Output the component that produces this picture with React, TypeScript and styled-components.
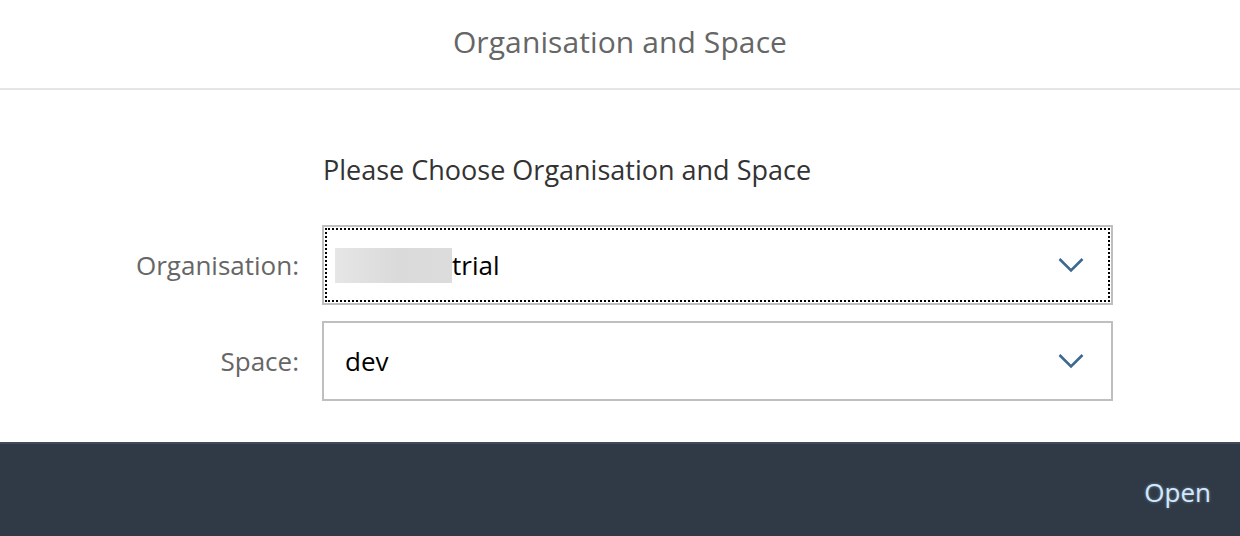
import React from "react";
import styled, { createGlobalStyle } from "styled-components";

const GlobalStyle = createGlobalStyle`
  html, body { margin: 0; padding: 0; background: #ffffff; }
  body { font-family: "Open Sans", "Noto Sans", Arial, sans-serif; }
  * { box-sizing: border-box; }
`;

const Dialog = styled.div`
  width: 1240px;
  height: 536px;
  display: flex;
  flex-direction: column;
  background: #ffffff;
`;

const Header = styled.header`
  height: 90px;
  flex: none;
  display: flex;
  align-items: center;
  justify-content: center;
  border-bottom: 2px solid #e5e5e5;
  padding-bottom: 5px;
`;

const Title = styled.h1`
  margin: 0;
  font-size: 30px;
  font-weight: 400;
  color: #666666;
  letter-spacing: 0.1px;
`;

const Body = styled.main`
  flex: 1;
  padding-top: 62px;
`;

const Form = styled.div`
  display: grid;
  grid-template-columns: 299px 791px;
  column-gap: 23px;
  row-gap: 16px;
  align-items: center;
`;

const Subtitle = styled.p`
  grid-column: 2;
  margin: 0 0 21px 1px;
  font-size: 27px;
  line-height: 36px;
  color: #333333;
`;

const Label = styled.label`
  grid-column: 1;
  text-align: right;
  font-size: 26px;
  color: #666666;
`;

const Select = styled.div<{ $focused?: boolean }>`
  grid-column: 2;
  height: 80px;
  border: 2px solid #bfbfbf;
  display: flex;
  align-items: center;
  justify-content: space-between;
  padding: 0 27px 0 21px;
  outline: ${(p) => (p.$focused ? "2px dotted #000000" : "none")};
  outline-offset: -5px;
`;

const Value = styled.span`
  display: flex;
  align-items: center;
  font-size: 26px;
  color: #000000;
`;

const Redacted = styled.span`
  display: inline-block;
  width: 117px;
  height: 35px;
  margin-left: -10px;
  background: linear-gradient(90deg, #e6e6e6 0%, #dadada 55%, #dcdcdc 100%);
`;

const Chevron = styled.svg`
  width: 26px;
  height: 16px;
  flex: none;
`;

const Footer = styled.footer`
  height: 94px;
  flex: none;
  background: #2f3a46;
  border-top: 2px solid #3f4b5a;
  display: flex;
  align-items: center;
  justify-content: flex-end;
  padding: 4px 29px 0 0;
`;

const OpenButton = styled.button`
  background: transparent;
  border: none;
  padding: 0;
  font-family: inherit;
  font-size: 26px;
  color: #d1e8ff;
  text-shadow: 0 0 3px rgba(209, 232, 255, 0.45);
  cursor: pointer;
`;

const ChevronIcon = () => (
  <Chevron viewBox="0 0 26 16">
    <path d="M1.5 2 L13 13.5 L24.5 2" fill="none" stroke="#3d6990" strokeWidth="2.6" />
  </Chevron>
);

export default function App() {
  return (
    <>
      <GlobalStyle />
      <Dialog>
        <Header>
          <Title>Organisation and Space</Title>
        </Header>
        <Body>
          <Form>
            <Subtitle>Please Choose Organisation and Space</Subtitle>
            <Label>Organisation:</Label>
            <Select $focused>
              <Value>
                <Redacted />
                trial
              </Value>
              <ChevronIcon />
            </Select>
            <Label>Space:</Label>
            <Select>
              <Value>dev</Value>
              <ChevronIcon />
            </Select>
          </Form>
        </Body>
        <Footer>
          <OpenButton>Open</OpenButton>
        </Footer>
      </Dialog>
    </>
  );
}
